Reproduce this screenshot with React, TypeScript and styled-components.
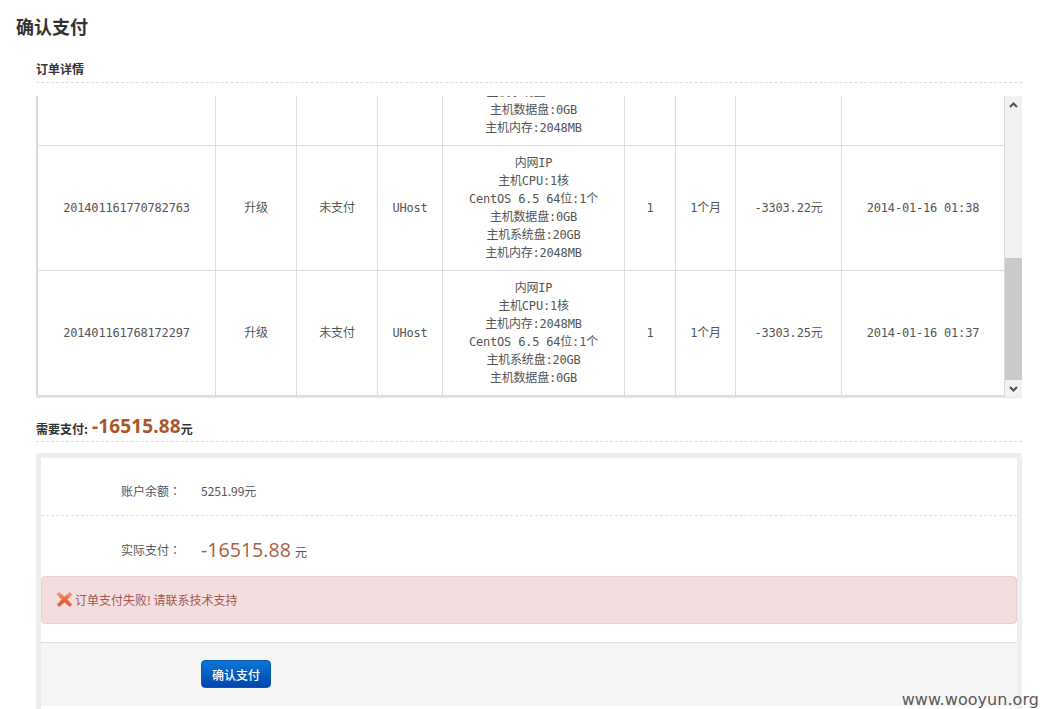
import React from "react";
import styled, { createGlobalStyle } from "styled-components";

const cjk = '"Noto Sans CJK SC", sans-serif';
const mono = '"DejaVu Sans Mono", "Noto Sans CJK SC", monospace';

const Global = createGlobalStyle`
  html, body {
    margin: 0;
    padding: 0;
    background: #fff;
    overflow: hidden;
  }
`;

const Page = styled.div`
  position: relative;
  width: 1040px;
  height: 709px;
  overflow: hidden;
  font-family: ${cjk};
  color: #333;
  box-sizing: border-box;
  padding: 13px 18px 0 16px;
`;

const Title = styled.h1`
  margin: 0;
  font-size: 18px;
  line-height: 26px;
  font-weight: 700;
  color: #333;
`;

const Content = styled.div`
  padding-left: 20px;
`;

const SectionHead = styled.div<{ $top: number; $h: number; $pb: number }>`
  margin-top: ${(p) => p.$top}px;
  height: ${(p) => p.$h}px;
  display: flex;
  align-items: flex-end;
  padding-bottom: ${(p) => p.$pb}px;
  box-sizing: border-box;
  border-bottom: 1px dashed #ddd;
  font-size: 12px;
  font-weight: 700;
  color: #333;
`;

const Amount = styled.span`
  font-family: "Noto Sans", sans-serif;
  font-size: 19px;
  line-height: 22px;
  font-weight: 700;
  letter-spacing: 0.15px;
  color: #a9562b;
  margin: 0 0 0 4px;
`;

const TableWrap = styled.div`
  margin-top: 13px;
  height: 301px;
  display: flex;
  border-bottom: 1px solid #e8e8e8;
`;

const Viewport = styled.div`
  flex: 1;
  overflow: hidden;
  display: flex;
  flex-direction: column;
  justify-content: flex-end;
`;

const Table = styled.table`
  flex: none;
  width: 968px;
  table-layout: fixed;
  border-collapse: separate;
  border-spacing: 0;
  border-left: 2px solid #d8d8d8;
  border-bottom: 2px solid #ddd;
  border-radius: 0 0 0 3px;
  font-family: ${mono};
  font-size: 12px;
  letter-spacing: -0.2px;
  color: #555;
`;

const Cell = styled.td`
  border-left: 1px solid #ddd;
  border-bottom: 1px solid #ddd;
  padding: 8px 0;
  height: 108px;
  text-align: center;
  vertical-align: middle;
  line-height: 18px;
  white-space: nowrap;

  &:first-child {
    border-left: 0;
  }

  tr:last-child & {
    border-bottom: 0;
  }
`;

const Scrollbar = styled.div`
  width: 18px;
  flex: none;
  background: #f1f1f1;
  border-left: 1px solid #ddd;
  box-sizing: border-box;
  display: flex;
  flex-direction: column;
`;

const ScrollArrow = styled.div`
  height: 17px;
  flex: none;
  display: flex;
  align-items: center;
  justify-content: center;
`;

const ScrollTrack = styled.div`
  flex: 1;
  display: flex;
  flex-direction: column;
  justify-content: flex-end;
`;

const ScrollThumb = styled.div`
  height: 122px;
  background: #cacaca;
`;

const PayBox = styled.div`
  margin-top: 11px;
  height: 262px;
  box-sizing: border-box;
  border: 5px solid #eee;
  border-radius: 3px;
  background: #fff;
  display: flex;
  flex-direction: column;
`;

const FormRow = styled.div<{ $h: number; $pt: number; $dashed?: boolean }>`
  height: ${(p) => p.$h}px;
  flex: none;
  display: flex;
  align-items: center;
  box-sizing: border-box;
  padding-top: ${(p) => p.$pt}px;
  border-bottom: ${(p) => (p.$dashed ? "1px dashed #e2e2e2" : "0")};
  font-size: 12px;
  color: #555;
`;

const FormLabel = styled.span`
  width: 140px;
  flex: none;
  text-align: right;
  font-family: "Noto Sans CJK TC", "Noto Sans CJK SC", sans-serif;
`;

const FormValue = styled.span`
  margin-left: 20px;
  display: flex;
  align-items: baseline;
  gap: 4px;
`;

const BigPrice = styled.span`
  font-family: "Open Sans", sans-serif;
  font-size: 19.6px;
  color: #a9603f;
`;

const Alert = styled.div`
  height: 48px;
  box-sizing: border-box;
  flex: none;
  display: flex;
  align-items: center;
  gap: 2px;
  padding: 0 0 2px 14px;
  background: #f2dede;
  border: 1px solid #ebd0d3;
  border-radius: 4px;
  font-size: 12px;
  color: #a9544f;
`;

const Footer = styled.div`
  margin-top: 18px;
  height: 64px;
  flex: none;
  box-sizing: border-box;
  border-top: 1px solid #ddd;
  background: #f5f5f5;
  padding: 17px 0 0 160px;
`;

const PayButton = styled.button`
  display: block;
  width: 70px;
  height: 28px;
  padding: 0;
  border: 1px solid #0a58b0;
  border-radius: 4px;
  background: linear-gradient(#0a78d6, #0345ad);
  color: #fff;
  font-family: ${cjk};
  font-size: 12px;
  font-weight: 500;
`;

const Watermark = styled.div`
  position: absolute;
  right: 1px;
  bottom: 0;
  font-family: "DejaVu Sans", sans-serif;
  font-size: 16px;
  letter-spacing: 0.05px;
  line-height: 18px;
  color: #595959;
`;

const IconX = () => (
  <svg width="17" height="17" viewBox="0 0 17 17">
    <defs>
      <linearGradient id="xFill" x1="0" y1="0" x2="0" y2="1">
        <stop offset="0" stopColor="#f59a7c" />
        <stop offset="0.55" stopColor="#ea6238" />
        <stop offset="1" stopColor="#dc5a3c" />
      </linearGradient>
    </defs>
    <path
      d="M3.2 1.2 L8.5 5.6 L13.8 1.2 L16 3.4 L11.4 8.5 L16 13.6 L13.8 15.9 L8.5 11.4 L3.2 15.9 L1 13.6 L5.6 8.5 L1 3.4 Z"
      fill="url(#xFill)"
      stroke="#dba893"
      strokeWidth="0.8"
      strokeLinejoin="round"
    />
  </svg>
);

const Chevron = ({ down }: { down?: boolean }) => (
  <svg width="9" height="6" viewBox="0 0 9 6">
    <path
      d={down ? "M1 1 L4.5 4.5 L8 1" : "M1 5 L4.5 1.5 L8 5"}
      fill="none"
      stroke="#505050"
      strokeWidth="2"
    />
  </svg>
);

const columns = [177, 81, 81, 65, 182, 51, 60, 106, 163];

// the top row is scrolled mostly out of view, as in a scrolled list
const rows = [
  {
    id: "",
    type: "",
    status: "",
    product: "",
    spec: ["内网IP", "主机CPU:1核", "CentOS 6.5 64位:1个", "主机系统盘:20GB", "主机数据盘:0GB", "主机内存:2048MB"],
    count: "",
    period: "",
    price: "",
    time: "",
  },
  {
    id: "201401161770782763",
    type: "升级",
    status: "未支付",
    product: "UHost",
    spec: ["内网IP", "主机CPU:1核", "CentOS 6.5 64位:1个", "主机数据盘:0GB", "主机系统盘:20GB", "主机内存:2048MB"],
    count: "1",
    period: "1个月",
    price: "-3303.22元",
    time: "2014-01-16 01:38",
  },
  {
    id: "201401161768172297",
    type: "升级",
    status: "未支付",
    product: "UHost",
    spec: ["内网IP", "主机CPU:1核", "主机内存:2048MB", "CentOS 6.5 64位:1个", "主机系统盘:20GB", "主机数据盘:0GB"],
    count: "1",
    period: "1个月",
    price: "-3303.25元",
    time: "2014-01-16 01:37",
  },
];

export default function App() {
  return (
    <Page>
      <Global />
      <Title>确认支付</Title>
      <Content>
        <SectionHead $top={17} $h={27} $pb={5}>订单详情</SectionHead>
        <TableWrap>
          <Viewport>
            <Table>
              <colgroup>
                {columns.map((w, i) => (
                  <col key={i} style={{ width: w }} />
                ))}
              </colgroup>
              <tbody>
                {rows.map((r, i) => (
                  <tr key={i}>
                    <Cell>{r.id}</Cell>
                    <Cell>{r.type}</Cell>
                    <Cell>{r.status}</Cell>
                    <Cell>{r.product}</Cell>
                    <Cell>
                      {r.spec.map((line) => (
                        <div key={line}>{line}</div>
                      ))}
                    </Cell>
                    <Cell>{r.count}</Cell>
                    <Cell>{r.period}</Cell>
                    <Cell>{r.price}</Cell>
                    <Cell>{r.time}</Cell>
                  </tr>
                ))}
              </tbody>
            </Table>
          </Viewport>
          <Scrollbar>
            <ScrollArrow>
              <Chevron />
            </ScrollArrow>
            <ScrollTrack>
              <ScrollThumb />
            </ScrollTrack>
            <ScrollArrow>
              <Chevron down />
            </ScrollArrow>
          </Scrollbar>
        </TableWrap>
        <SectionHead $top={16} $h={28} $pb={4}>
          需要支付:<Amount>-16515.88</Amount>元
        </SectionHead>
        <PayBox>
          <FormRow $h={58} $pt={8} $dashed>
            <FormLabel>账户余额：</FormLabel>
            <FormValue>5251.99元</FormValue>
          </FormRow>
          <FormRow $h={60} $pt={7}>
            <FormLabel>实际支付：</FormLabel>
            <FormValue>
              <BigPrice>-16515.88</BigPrice>元
            </FormValue>
          </FormRow>
          <Alert>
            <IconX />
            订单支付失败! 请联系技术支持
          </Alert>
          <Footer>
            <PayButton>确认支付</PayButton>
          </Footer>
        </PayBox>
      </Content>
      <Watermark>www.wooyun.org</Watermark>
    </Page>
  );
}
